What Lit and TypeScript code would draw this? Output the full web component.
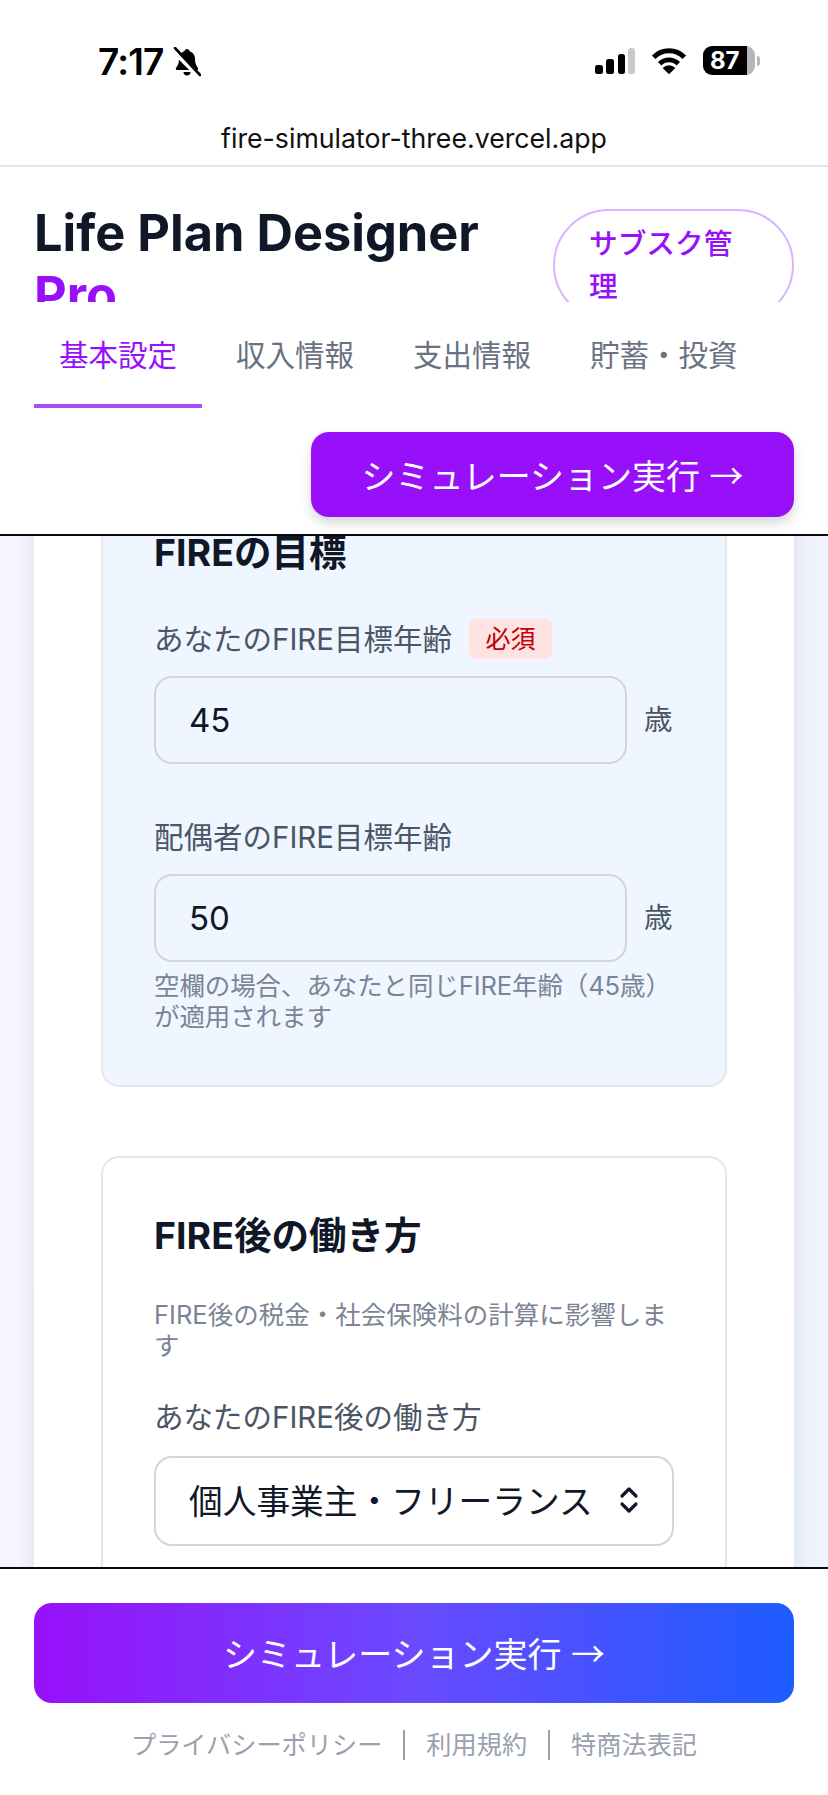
import { LitElement, html, css } from 'lit';
import { customElement } from 'lit/decorators.js';

@customElement('app-root')
export class AppRoot extends LitElement {
    static styles = css`
    :host {
      display: flex;
      flex-direction: column;
      width: 828px;
      height: 1795px;
      overflow: hidden;
      background: #fff;
      font-family: Inter, 'Noto Sans CJK JP', sans-serif;
      color: #101828;
    }

    .status {
      height: 100px;
      flex: none;
      box-sizing: border-box;
      padding: 46px 68px 0 98px;
      display: flex;
      justify-content: space-between;
      align-items: flex-start;
    }
    .status-left { display: flex; gap: 9px; align-items: center; }
    .time { font-size: 37px; line-height: 32px; font-weight: 600; color: #000; letter-spacing: -0.8px; }
    .status-right { display: flex; align-items: center; gap: 16px; }
    .battery { display: flex; align-items: center; gap: 2px; }
    .battery-body {
      width: 52px;
      height: 29px;
      border-radius: 9px;
      background: linear-gradient(90deg, #000 85%, #b4b6bb 85%);
      color: #fff;
      font-size: 24px;
      line-height: 29px;
      font-weight: 700;
      box-sizing: border-box;
      padding-left: 7px;
    }
    .battery-tip { width: 3px; height: 10px; border-radius: 0 3px 3px 0; background: #b4b6bb; }

    .url {
      height: 67px;
      flex: none;
      box-sizing: border-box;
      border-bottom: 2px solid #e5e5e5;
      text-align: center;
      font-size: 26.7px;
      line-height: 39px;
      padding-top: 19px;
      color: #111;
      font-family: Inter, sans-serif;
    }

    .brand {
      height: 135px;
      flex: none;
      overflow: hidden;
      box-sizing: border-box;
      padding: 35px 34px 0 34px;
      display: flex;
      justify-content: space-between;
      align-items: flex-start;
    }
    .title { margin: 0; font-size: 50.5px; line-height: 62px; font-weight: 700; width: 480px; }
    .title span { display: block; color: #9810fa; }
    .subs {
      width: 241px;
      box-sizing: border-box;
      border: 2px solid #d8b4fe;
      border-radius: 64px;
      padding: 11px 34px;
      color: #9810fa;
      font-size: 28.7px;
      line-height: 43px;
      font-weight: 500;
      margin-top: 7px;
    }

    .tabs { flex: none; display: flex; padding: 0 34px; height: 106px; box-sizing: border-box; }
    .tab {
      width: 177px;
      box-sizing: border-box;
      padding-top: 31px;
      font-size: 29.5px;
      line-height: 44px;
      color: #6a7282;
      text-indent: 25px;
      white-space: nowrap;
    }
    .tab.wide { width: 200px; }
    .tab.active { width: 168px; margin-right: 9px; color: #9810fa; border-bottom: 4px solid #a94df5; }

    .action-row { flex: none; height: 126px; box-sizing: border-box; padding: 24px 34px 0; display: flex; justify-content: flex-end; }
    .run {
      width: 483px;
      height: 85px;
      border-radius: 18px;
      background: #9810fa;
      color: #fff;
      font-size: 34px;
      line-height: 85px;
      font-weight: 400;
      text-align: center;
      box-shadow: 0 6px 12px rgba(0, 0, 0, 0.16);
    }
    .arrow { font-family: 'Noto Sans CJK JP', sans-serif; }

    .rule { height: 2px; flex: none; background: #0b0b0b; }

    main {
      height: 1031px;
      flex: none;
      overflow: hidden;
      padding: 0 34px;
      background: linear-gradient(100deg, #f7f4ff, #eef3fe);
    }
    .sheet {
      background: #fff;
      box-shadow: 0 8px 20px rgba(30, 30, 80, 0.1);
      padding: 0 67px 68px;
      margin-top: -40px;
    }
    .panel {
      border: 2px solid #e5e7eb;
      border-radius: 18px;
      padding: 51px 51px 80px;
      background: #fff;
    }
    .panel.blue {
      background: #eff6ff;
      height: 591px;
      box-sizing: border-box;
      margin-bottom: 69px;
      padding-top: 28px;
    }
    .panel.blue .group:first-of-type { margin-top: 38px; }
    h3 { margin: 0; font-size: 37.5px; line-height: 54px; font-weight: 700; }
    .label {
      display: flex;
      align-items: center;
      gap: 17px;
      font-size: 29.5px;
      line-height: 42px;
      font-weight: 400;
      color: #4a5565;
    }
    .tag {
      width: 83px;
      height: 40px;
      border-radius: 7px;
      background: #ffe2e2;
      color: #c10007;
      font-size: 25px;
      line-height: 40px;
      text-align: center;
    }
    .field { display: flex; align-items: center; gap: 17px; margin-top: 16px; }
    input {
      width: 473px;
      height: 88px;
      box-sizing: border-box;
      border: 2px solid #d1d5dc;
      border-radius: 18px;
      background: transparent;
      padding: 0 33px 1px;
      font-family: Inter, sans-serif;
      font-size: 33px;
      color: #101828;
      outline: none;
    }
    .unit { font-size: 28.5px; color: #4a5565; margin-top: -5px; }
    .group { margin-top: 35px; }
    .group + .group { margin-top: 52px; }
    .help { margin: 8px 0 0; font-size: 25.5px; line-height: 31px; color: #7b8494; letter-spacing: -0.1px; }
    .desc { margin: 36px 0 0; font-size: 25.5px; line-height: 31px; color: #7b8494; width: 518px; }
    .select-wrap { position: relative; width: 520px; margin-top: 18px; }
    select {
      display: block;
      width: 100%;
      height: 90px;
      box-sizing: border-box;
      appearance: none;
      -webkit-appearance: none;
      border: 2px solid #d1d5dc;
      border-radius: 18px;
      background: #fff;
      padding: 0 33px;
      font-family: Inter, 'Noto Sans CJK JP', sans-serif;
      font-size: 33.7px;
      color: #101828;
    }
    .chev { position: absolute; right: 34px; top: 30px; }

    footer { flex: 1; box-sizing: border-box; padding: 34px 34px 0; }
    .cta {
      height: 100px;
      border-radius: 18px;
      background: linear-gradient(90deg, #9810fa, #6a4aff 50%, #1d5cff);
      color: #fff;
      font-size: 34px;
      line-height: 100px;
      font-weight: 400;
      text-align: center;
    }
    .links {
      display: flex;
      justify-content: center;
      align-items: center;
      margin-top: 26px;
      color: #99a1af;
      font-size: 25.2px;
      line-height: 32px;
    }
    .links i { display: block; width: 2px; height: 30px; background: #99a1af; margin: 0 21px; }
  `;

    render() {
        return html`
      <div class="status">
        <div class="status-left">
          <span class="time">7:17</span>
          <svg width="28" height="30" viewBox="0 0 28 30">
            <path d="M14 2c-1.5 0-2.5 1-2.6 2.3C7.8 5.3 6 8.5 6 12c0 4-1 6.5-3 9-.6.8-.2 2 1 2h20c1.2 0 1.6-1.2 1-2-2-2.5-3-5-3-9 0-3.5-1.8-6.7-5.4-7.7C16.5 3 15.5 2 14 2z"/>
            <path d="M10.5 25a3.5 3.5 0 0 0 7 0z"/>
            <path d="M0 4 L25 29" stroke="#fff" stroke-width="4"/>
            <path d="M2 1 L27 28" stroke="#000" stroke-width="2.6" stroke-linecap="round"/>
          </svg>
        </div>
        <div class="status-right">
          <svg width="40" height="28" viewBox="0 0 40 28">
            <rect x="0" y="18" width="8" height="9" rx="2.5"/>
            <rect x="11" y="12" width="8" height="15" rx="2.5"/>
            <rect x="23" y="7" width="7" height="20" rx="2.5"/>
            <rect x="33" y="1" width="7" height="26" rx="2.5" fill="#c8c9cd"/>
          </svg>
          <svg width="36" height="28" viewBox="0 0 34 26">
            <path d="M2.5 9.5a20 20 0 0 1 29 0" fill="none" stroke="#000" stroke-width="4.6"/>
            <path d="M8.2 15.5a12.5 12.5 0 0 1 17.6 0" fill="none" stroke="#000" stroke-width="4.6"/>
            <path d="M17 25.5 11 19.5a8.5 8.5 0 0 1 12 0z"/>
          </svg>
          <div class="battery">
            <div class="battery-body">87</div>
            <div class="battery-tip"></div>
          </div>
        </div>
      </div>
      <div class="url">fire-simulator-three.vercel.app</div>

      <div class="brand">
        <h1 class="title">Life Plan Designer<span>Pro</span></h1>
        <div class="subs">サブスク管理</div>
      </div>

      <div class="tabs">
        <div class="tab active">基本設定</div>
        <div class="tab">収入情報</div>
        <div class="tab">支出情報</div>
        <div class="tab wide">貯蓄・投資</div>
      </div>

      <div class="action-row"><div class="run">シミュレーション実行 <span class="arrow">→</span></div></div>
      <div class="rule"></div>

      <main>
        <div class="sheet">
          <section class="panel blue">
            <h3>FIREの目標</h3>
            <div class="group">
              <div class="label">あなたのFIRE目標年齢 <span class="tag">必須</span></div>
              <div class="field"><input .value=${'45'} /><span class="unit">歳</span></div>
            </div>
            <div class="group">
              <div class="label">配偶者のFIRE目標年齢</div>
              <div class="field"><input .value=${'50'} /><span class="unit">歳</span></div>
              <p class="help">空欄の場合、あなたと同じFIRE年齢（45歳）が適用されます</p>
            </div>
          </section>

          <section class="panel">
            <h3>FIRE後の働き方</h3>
            <p class="desc">FIRE後の税金・社会保険料の計算に影響します</p>
            <div class="group">
              <div class="label">あなたのFIRE後の働き方</div>
              <div class="select-wrap">
                <select><option>個人事業主・フリーランス</option></select>
                <svg class="chev" width="22" height="28" viewBox="0 0 22 28" fill="none" stroke="#101828" stroke-width="3.2" stroke-linecap="round" stroke-linejoin="round">
                  <path d="M4 10l7-7 7 7"/>
                  <path d="M4 18l7 7 7-7"/>
                </svg>
              </div>
            </div>
          </section>
        </div>
      </main>

      <div class="rule"></div>
      <footer>
        <div class="cta">シミュレーション実行 <span class="arrow">→</span></div>
        <div class="links">
          <span>プライバシーポリシー</span><i></i><span>利用規約</span><i></i><span>特商法表記</span>
        </div>
      </footer>
    `;
    }
}
